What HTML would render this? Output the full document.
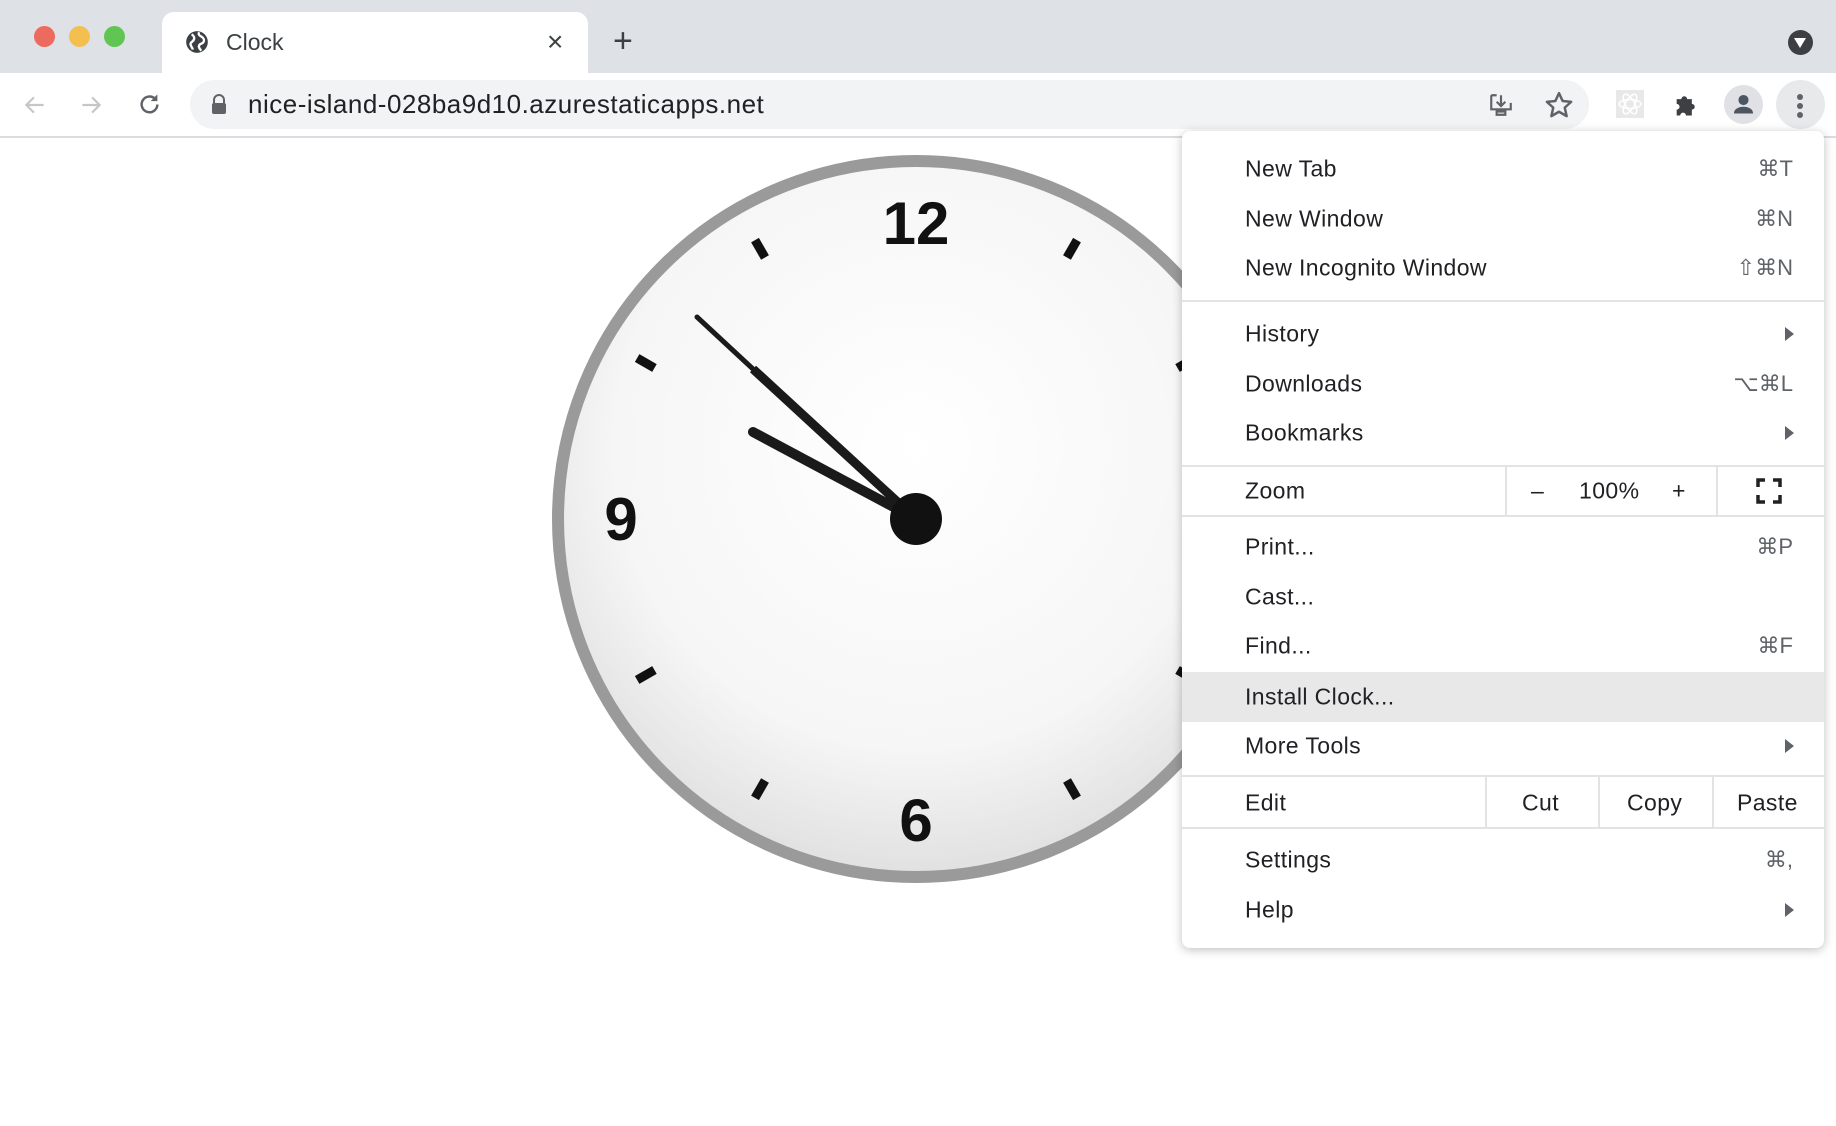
<!DOCTYPE html>
<html><head><meta charset="utf-8"><style>
*{margin:0;padding:0;box-sizing:border-box}
body{width:1836px;height:1126px;overflow:hidden;background:#fff;font-family:"Liberation Sans",Arial,sans-serif;position:relative}
.abs{position:absolute}
.mi{position:absolute;left:1245px;font-size:23px;letter-spacing:0.4px;color:#202124;transform:translateY(-50%)}
.sc{position:absolute;right:31px;font-size:22px;color:#5f6368;transform:translateY(-50%)}
.arr{position:absolute;right:30px;width:0;height:0;border-left:9px solid #5f6368;border-top:7px solid transparent;border-bottom:7px solid transparent;transform:translateY(-50%)}
.sep{position:absolute;left:0;right:0;height:2px;background:#e3e3e3}
.vd{position:absolute;width:2px;background:#e3e3e3}
</style></head><body>
<div class="abs" style="left:0;top:0;width:1836px;height:73px;background:#dee1e6"></div>
<div class="abs" style="left:34px;top:26px;width:21px;height:21px;border-radius:50%;background:#ec6a5e"></div>
<div class="abs" style="left:69px;top:26px;width:21px;height:21px;border-radius:50%;background:#f4bf4f"></div>
<div class="abs" style="left:104px;top:26px;width:21px;height:21px;border-radius:50%;background:#61c554"></div>
<div class="abs" style="left:162px;top:12px;width:426px;height:63px;background:#fff;border-radius:12px 12px 0 0"></div>
<svg class="abs" style="left:184px;top:29px" width="26" height="26" viewBox="0 0 24 24"><circle cx="12" cy="12" r="10" fill="#3c4043"/><path d="M7 5c2 1 3 3 2 5s-3 2-3 4 2 3 2 5M14 3c-1 2 0 3 2 4s3 3 2 5-3 1-4 3 1 4 2 5" stroke="#fff" stroke-width="2.2" fill="none"/></svg>
<div class="abs" style="left:226px;top:29px;font-size:23px;color:#3c4043">Clock</div>
<div class="abs" style="left:547px;top:26px;font-size:28px;color:#3c4043">×</div>
<div class="abs" style="left:613px;top:22px;font-size:34px;color:#3c4043">+</div>
<div class="abs" style="left:1788px;top:30px;width:25px;height:25px;border-radius:50%;background:#3c4043"></div>
<div class="abs" style="left:1794px;top:38px;border-top:10px solid #fff;border-left:6.5px solid transparent;border-right:6.5px solid transparent"></div>
<div class="abs" style="left:0;top:73px;width:1836px;height:65px;background:#fff;border-bottom:2px solid #dadce0"></div>
<svg class="abs" style="left:22px;top:92px" width="26" height="26" viewBox="0 0 24 24"><path d="M20 12H5M11 5l-7 7 7 7" stroke="#c4c6c9" stroke-width="2" fill="none"/></svg>
<svg class="abs" style="left:78px;top:92px" width="26" height="26" viewBox="0 0 24 24"><path d="M4 12h15M13 5l7 7-7 7" stroke="#c4c6c9" stroke-width="2" fill="none"/></svg>
<svg class="abs" style="left:136px;top:91px" width="27" height="27" viewBox="0 0 24 24"><path d="M19 12a7 7 0 1 1-2-5" stroke="#5f6368" stroke-width="2.2" fill="none"/><path d="M19 3v6h-6z" fill="#5f6368"/></svg>
<div class="abs" style="left:190px;top:80px;width:1399px;height:49px;background:#f1f3f4;border-radius:25px"></div>
<svg class="abs" style="left:210px;top:93px" width="18" height="22" viewBox="0 0 18 22"><path d="M4 10V7a5 5 0 0 1 10 0v3" stroke="#5f6368" stroke-width="2" fill="none"/><rect x="2" y="10" width="14" height="11" rx="2" fill="#5f6368"/></svg>
<div class="abs" style="left:248px;top:89px;font-size:26px;letter-spacing:0.5px;color:#202124">nice-island-028ba9d10.azurestaticapps.net</div>
<svg class="abs" style="left:1488px;top:92px" width="26" height="26" viewBox="0 0 24 24"><path d="M3 3h5M3 3v13h18v-6M12 3v10M8 9l4 4 4-4M8 18h8v3H8z" stroke="#5f6368" stroke-width="2" fill="none"/></svg>
<svg class="abs" style="left:1544px;top:90px" width="30" height="30" viewBox="0 0 24 24"><path d="M12 2.5l2.9 6.3 6.8.7-5.1 4.6 1.5 6.8L12 17.4l-6.1 3.5 1.5-6.8-5.1-4.6 6.8-.7z" stroke="#5f6368" stroke-width="2" fill="none" stroke-linejoin="round"/></svg>
<div class="abs" style="left:1616px;top:90px;width:28px;height:28px;background:#e8e8e8"></div>
<svg class="abs" style="left:1616px;top:90px" width="28" height="28" viewBox="0 0 28 28"><g stroke="#fff" stroke-width="1.5" fill="none"><ellipse cx="14" cy="14" rx="11" ry="4.5"/><ellipse cx="14" cy="14" rx="11" ry="4.5" transform="rotate(60 14 14)"/><ellipse cx="14" cy="14" rx="11" ry="4.5" transform="rotate(120 14 14)"/></g></svg>
<svg class="abs" style="left:1672px;top:91px" width="28" height="28" viewBox="0 0 24 24"><path d="M4 7h4a2.5 2.5 0 0 1 5 0h4v4a2.5 2.5 0 0 1 0 5v5h-5a2.5 2.5 0 0 0-5 0H4v-5a2.5 2.5 0 0 0 0-5z" fill="#3c4043"/></svg>
<div class="abs" style="left:1724px;top:85px;width:39px;height:39px;border-radius:50%;background:#dfe1e5"></div>
<svg class="abs" style="left:1730px;top:91px" width="27" height="27" viewBox="0 0 24 24"><circle cx="12" cy="8" r="4.5" fill="#4c5562"/><path d="M3.5 20c0-4 4-6 8.5-6s8.5 2 8.5 6z" fill="#4c5562"/></svg>
<div class="abs" style="left:1776px;top:80px;width:49px;height:49px;border-radius:50%;background:#e8e9eb"></div>
<div class="abs" style="left:1797px;top:94px;width:6px;height:6px;border-radius:50%;background:#5f6368;box-shadow:0 9px 0 #5f6368,0 18px 0 #5f6368"></div>

<svg class="abs" style="left:0;top:140px" width="1836" height="986">
<defs><radialGradient id="g" cx="0.5" cy="0.4" r="0.6"><stop offset="0" stop-color="#fff"/><stop offset="0.7" stop-color="#f6f6f6"/><stop offset="1" stop-color="#e0e0e0"/></radialGradient></defs>
<g transform="translate(916,379)">
<circle r="358" fill="url(#g)" stroke="#9a9a9a" stroke-width="12"/>
<g stroke="#111" stroke-width="9">
<line x1="0" y1="-302" x2="0" y2="-322" transform="rotate(30)"/><line x1="0" y1="-302" x2="0" y2="-322" transform="rotate(60)"/><line x1="0" y1="-302" x2="0" y2="-322" transform="rotate(90)"/><line x1="0" y1="-302" x2="0" y2="-322" transform="rotate(120)"/><line x1="0" y1="-302" x2="0" y2="-322" transform="rotate(150)"/><line x1="0" y1="-302" x2="0" y2="-322" transform="rotate(210)"/><line x1="0" y1="-302" x2="0" y2="-322" transform="rotate(240)"/><line x1="0" y1="-302" x2="0" y2="-322" transform="rotate(300)"/><line x1="0" y1="-302" x2="0" y2="-322" transform="rotate(330)"/>
</g>
<g font-family="Liberation Sans,sans-serif" font-weight="bold" font-size="60" fill="#111" text-anchor="middle">
<text x="0" y="-275">12</text><text x="-295" y="21">9</text><text x="0" y="322">6</text>
</g>
<line x1="0" y1="0" x2="-163" y2="-87" stroke="#1a1a1a" stroke-width="10" stroke-linecap="round"/>
<line x1="0" y1="0" x2="-163" y2="-150" stroke="#1a1a1a" stroke-width="9"/>
<line x1="-163" y1="-150" x2="-219" y2="-202" stroke="#1a1a1a" stroke-width="5" stroke-linecap="round"/>
<circle r="26" fill="#111"/>
</g></svg>

<div class="abs" style="left:1182px;top:131px;width:642px;height:817px;background:#fff;border-radius:8px;box-shadow:0 2px 10px rgba(0,0,0,.25)">
<div style="position:absolute;left:0;right:0;top:541px;height:50px;background:#e8e8e8"></div>
<div class="sep" style="top:169px"></div>
<div class="sep" style="top:334px"></div>
<div class="sep" style="top:384px"></div>
<div class="sep" style="top:644px"></div>
<div class="sep" style="top:696px"></div>
<div class="vd" style="left:323px;top:335px;height:50px"></div>
<div class="vd" style="left:534px;top:335px;height:50px"></div>
<div class="vd" style="left:303px;top:645px;height:52px"></div>
<div class="vd" style="left:416px;top:645px;height:52px"></div>
<div class="vd" style="left:530px;top:645px;height:52px"></div>
</div>
<div class="abs" style="left:1182px;top:131px;width:642px;height:817px">
<div class="mi" style="left:63px;top:38px">New Tab</div><div class="sc" style="top:38px">⌘T</div>
<div class="mi" style="left:63px;top:88px">New Window</div><div class="sc" style="top:88px">⌘N</div>
<div class="mi" style="left:63px;top:137px">New Incognito Window</div><div class="sc" style="top:137px">⇧⌘N</div>
<div class="mi" style="left:63px;top:203px">History</div><div class="arr" style="top:203px"></div>
<div class="mi" style="left:63px;top:253px">Downloads</div><div class="sc" style="top:253px">⌥⌘L</div>
<div class="mi" style="left:63px;top:302px">Bookmarks</div><div class="arr" style="top:302px"></div>
<div class="mi" style="left:63px;top:360px">Zoom</div>
<div class="mi" style="left:349px;top:360px">–</div>
<div class="mi" style="left:397px;top:360px">100%</div>
<div class="mi" style="left:490px;top:360px">+</div>
<svg class="abs" style="left:574px;top:347px" width="26" height="26" viewBox="0 0 26 26"><path d="M2 9V2h7M17 2h7v7M24 17v7h-7M9 24H2v-7" stroke="#202124" stroke-width="3.5" fill="none"/></svg>
<div class="mi" style="left:63px;top:416px">Print...</div><div class="sc" style="top:416px">⌘P</div>
<div class="mi" style="left:63px;top:466px">Cast...</div>
<div class="mi" style="left:63px;top:515px">Find...</div><div class="sc" style="top:515px">⌘F</div>
<div class="mi" style="left:63px;top:566px">Install Clock...</div>
<div class="mi" style="left:63px;top:615px">More Tools</div><div class="arr" style="top:615px"></div>
<div class="mi" style="left:63px;top:672px">Edit</div>
<div class="mi" style="left:340px;top:672px">Cut</div>
<div class="mi" style="left:445px;top:672px">Copy</div>
<div class="mi" style="left:555px;top:672px">Paste</div>
<div class="mi" style="left:63px;top:729px">Settings</div><div class="sc" style="top:729px">⌘,</div>
<div class="mi" style="left:63px;top:779px">Help</div><div class="arr" style="top:779px"></div>
</div>
</body></html>
